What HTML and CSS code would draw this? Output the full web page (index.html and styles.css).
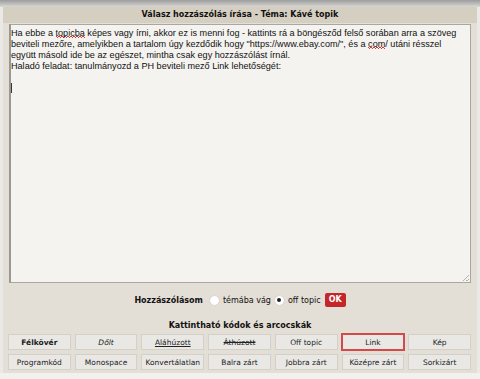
FILE: index.html
```html
<!DOCTYPE html>
<html lang="hu">
<head>
    <meta charset="UTF-8">
    <meta name="viewport" content="width=device-width, initial-scale=1.0">
    <title>Válasz hozzászólás írása</title>
    <link rel="stylesheet" href="styles.css">
</head>
<body>
    <div class="top-shade"></div>
    <div class="panel">
        <div class="panel-head">Válasz hozzászólás írása - Téma: Kávé topik</div>
        <div class="editor">
            <div class="msg">Ha ebbe a <span class="typo">topicba</span> képes vagy írni, akkor ez is menni fog - kattints rá a böngésződ felső sorában arra a szöveg beviteli mezőre, amelyikben a tartalom úgy kezdődik hogy "https://www.ebay.com/", és a <span class="typo">com</span>/ utáni résszel együtt másold ide be az egészet, mintha csak egy hozzászólást írnál.<br>Haladó feladat: tanulmányozd a PH beviteli mező Link lehetőségét:<br><br><span class="caret"></span></div>
            <span class="grip"></span>
        </div>
        <div class="topic-row">
            <b>Hozzászólásom</b>
            <label><span class="radio"></span>témába vág</label>
            <label><span class="radio on"></span>off topic</label>
            <span class="ok">OK</span>
        </div>
        <div class="codes-title">Kattintható kódok és arcocskák</div>
        <div class="codes">
            <button class="bold">Félkövér</button>
            <button class="italic">Dőlt</button>
            <button class="under">Aláhúzott</button>
            <button class="strike">Áthúzott</button>
            <button>Off topic</button>
            <button class="active">Link</button>
            <button>Kép</button>
            <button>Programkód</button>
            <button>Monospace</button>
            <button>Konvertálatlan</button>
            <button>Balra zárt</button>
            <button>Jobbra zárt</button>
            <button>Középre zárt</button>
            <button>Sorkizárt</button>
        </div>
    </div>
    <div class="bottom"></div>
</body>
</html>
```

FILE: styles.css
```css
body {
    margin: 0;
    background-color: #ebe9e6;
    font-family: "DejaVu Sans", Verdana, sans-serif;
    color: #111;
}
.top-shade {
    height: 7px;
    background: linear-gradient(#9c9c9c, #d9d8d5);
}
.panel {
    margin: 0 3px;
    background-color: #e4dfd6;
    padding-bottom: 3px;
}
.panel-head {
    background-color: #d5cfc1;
    text-align: center;
    font-weight: bold;
    font-size: 8px;
    line-height: 16px;
}
.editor {
    position: relative;
    margin: 1px 6px 0 6px;
    height: 257px;
    background-color: #f4f3ef;
    border: 1px solid #a9a7a3;
    border-left: 2px solid #9a9893;
}
.msg {
    font-family: "Liberation Sans", Arial, sans-serif;
    font-size: 9.1px;
    line-height: 11px;
    padding: 3px 4px 3px 0;
}
.typo {
    background: radial-gradient(circle at 50% 0, transparent 1px, #d23c3c 1px, #d23c3c 1.6px, transparent 1.6px) repeat-x 0 100% / 3px 2px;
}
.caret {
    display: inline-block;
    width: 1px;
    height: 10px;
    background-color: #333;
    vertical-align: top;
}
.grip {
    position: absolute;
    right: 1px;
    bottom: 1px;
    width: 6px;
    height: 6px;
    background: linear-gradient(135deg, transparent 45%, #b5b3ae 45%, #b5b3ae 55%, transparent 55%, transparent 75%, #b5b3ae 75%, #b5b3ae 85%, transparent 85%);
}
.topic-row {
    display: flex;
    justify-content: center;
    align-items: center;
    gap: 4px;
    margin-top: 9px;
    font-size: 8px;
    height: 16px;
}
.topic-row b {
    margin-right: 3px;
}
.topic-row label {
    display: flex;
    align-items: center;
    gap: 4px;
}
.radio {
    width: 9px;
    height: 9px;
    border-radius: 50%;
    background-color: #fff;
    box-shadow: 0 0 1px #aaa;
    display: flex;
    align-items: center;
    justify-content: center;
}
.radio.on::after {
    content: "";
    width: 4px;
    height: 4px;
    border-radius: 50%;
    background-color: #222;
}
.ok {
    background-color: #c4262a;
    color: #fff;
    font-weight: bold;
    font-size: 8px;
    line-height: 14px;
    padding: 0 4px;
    border-radius: 2px;
}
.codes-title {
    text-align: center;
    font-weight: bold;
    font-size: 8px;
    margin-top: 13px;
    line-height: 10px;
}
.codes {
    display: grid;
    grid-template-columns: repeat(7, 1fr);
    gap: 4px 4px;
    margin: 3px 0 0 5px;
    width: 463px;
}
.codes button {
    font-family: "DejaVu Sans", Verdana, sans-serif;
    font-size: 7.5px;
    height: 16px;
    padding: 0;
    color: #222;
    background-color: #e9e8e5;
    border: 1px solid #d3d0ca;
    border-radius: 0;
}
.codes .bold { font-weight: bold; }
.codes .italic { font-style: italic; }
.codes .under { text-decoration: underline; }
.codes .strike { text-decoration: line-through; }
.codes .active {
    border-color: #d44a4a;
    box-shadow: 0 0 0 1px #d44a4a;
}
.bottom {
    height: 10px;
    background-color: #f2f1ee;
}
```
